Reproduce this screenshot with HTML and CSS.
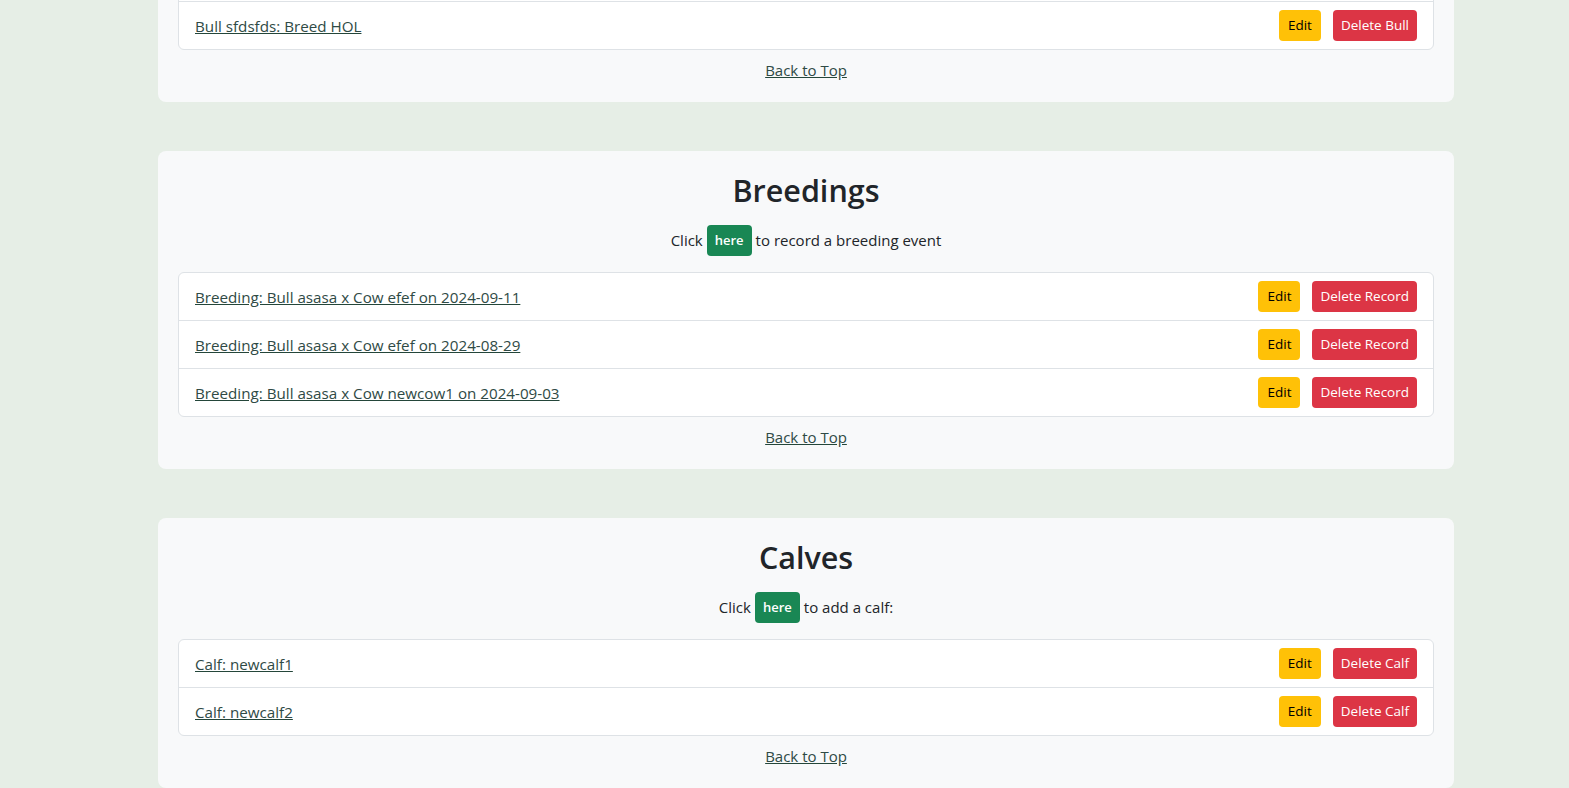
FILE: index.html
```html
<!DOCTYPE html>
<html lang="en">
<head>
<meta charset="utf-8">
<title>Herd Records</title>
<link rel="stylesheet" href="styles.css">
</head>
<body>
<main class="page">
  <section class="card" id="bulls">
    <h2 class="card-title">Bulls</h2>
    <p class="card-lead">Click <a class="btn btn-success" href="#">here</a> to add a bull:</p>
    <ul class="list">
      <li class="list-item"><a class="item-link" href="#">Bull asasa: Breed ANG</a><span class="actions"><a class="btn btn-warning" href="#">Edit</a><a class="btn btn-danger" href="#">Delete Bull</a></span></li>
      <li class="list-item"><a class="item-link" href="#">Bull sfdsfds: Breed HOL</a><span class="actions"><a class="btn btn-warning" href="#">Edit</a><a class="btn btn-danger" href="#">Delete Bull</a></span></li>
    </ul>
    <a class="back" href="#">Back to Top</a>
  </section>

  <section class="card" id="breedings">
    <h2 class="card-title">Breedings</h2>
    <p class="card-lead">Click <a class="btn btn-success" href="#">here</a> to record a breeding event</p>
    <ul class="list">
      <li class="list-item"><a class="item-link" href="#">Breeding: Bull asasa x Cow efef on 2024-09-11</a><span class="actions"><a class="btn btn-warning" href="#">Edit</a><a class="btn btn-danger" href="#">Delete Record</a></span></li>
      <li class="list-item"><a class="item-link" href="#">Breeding: Bull asasa x Cow efef on 2024-08-29</a><span class="actions"><a class="btn btn-warning" href="#">Edit</a><a class="btn btn-danger" href="#">Delete Record</a></span></li>
      <li class="list-item"><a class="item-link" href="#">Breeding: Bull asasa x Cow newcow1 on 2024-09-03</a><span class="actions"><a class="btn btn-warning" href="#">Edit</a><a class="btn btn-danger" href="#">Delete Record</a></span></li>
    </ul>
    <a class="back" href="#">Back to Top</a>
  </section>

  <section class="card" id="calves">
    <h2 class="card-title">Calves</h2>
    <p class="card-lead">Click <a class="btn btn-success" href="#">here</a> to add a calf:</p>
    <ul class="list">
      <li class="list-item"><a class="item-link" href="#">Calf: newcalf1</a><span class="actions"><a class="btn btn-warning" href="#">Edit</a><a class="btn btn-danger" href="#">Delete Calf</a></span></li>
      <li class="list-item"><a class="item-link" href="#">Calf: newcalf2</a><span class="actions"><a class="btn btn-warning" href="#">Edit</a><a class="btn btn-danger" href="#">Delete Calf</a></span></li>
    </ul>
    <a class="back" href="#">Back to Top</a>
  </section>
</main>
<script src="script.js"></script>
</body>
</html>
```

FILE: styles.css
```css
html, body {
  margin: 0;
  padding: 0;
}
body {
  background: #e6eee6;
  color: #212529;
  font-family: "Open Sans", "Noto Sans", "Liberation Sans", sans-serif;
  font-size: 15px;
  line-height: 24px;
}
.page {
  display: flex;
  flex-direction: column;
  gap: 49px;
  padding: 48px 115px 60px 158px;
}
.card {
  background: #f8f9fa;
  border-radius: 8px;
  padding: 20px 20px 20px;
  display: flex;
  flex-direction: column;
  align-items: center;
}
.card-title {
  margin: 0 0 8px;
  font-size: 30.5px;
  font-weight: 600;
  line-height: 38px;
  color: #212529;
}
.card-lead {
  margin: 0 0 16px;
  height: 39px;
  box-sizing: border-box;
  padding-top: 7px;
  display: flex;
  align-items: center;
  gap: 4px;
}
.list {
  list-style: none;
  margin: 0;
  padding: 0;
  align-self: stretch;
  background: #fff;
  border: 1px solid #dee2e6;
  border-radius: 6px;
}
.list-item {
  display: flex;
  align-items: center;
  justify-content: space-between;
  padding: 8px 16px 8px 16px;
  border-top: 1px solid #dee2e6;
}
.list-item:first-child {
  border-top: none;
}
.item-link {
  font-size: 15.2px;
}
.item-link, .back {
  color: #2f4a45;
  text-decoration: underline;
  text-decoration-color: #24463a;
}
.back {
  margin-top: 8px;
}
.actions {
  display: flex;
  gap: 12px;
}
.btn {
  display: inline-block;
  font-size: 13.5px;
  line-height: 21px;
  padding: 5px 8px;
  border-radius: 4px;
  text-decoration: none;
}
.btn-success {
  background: #198754;
  color: #fff;
  font-size: 13px;
  font-weight: 600;
  padding: 5px 8px;
}
.btn-warning {
  background: #ffc107;
  color: #000;
  padding: 5px 9px;
}
.btn-danger {
  background: #dc3545;
  color: #fff;
}
```

FILE: script.js
```js
function alignToBreedings() {
  var target = document.getElementById('breedings');
  var y = target.getBoundingClientRect().top + window.scrollY - 151;
  window.scrollTo(0, y);
}
alignToBreedings();
window.addEventListener('load', alignToBreedings);
```
